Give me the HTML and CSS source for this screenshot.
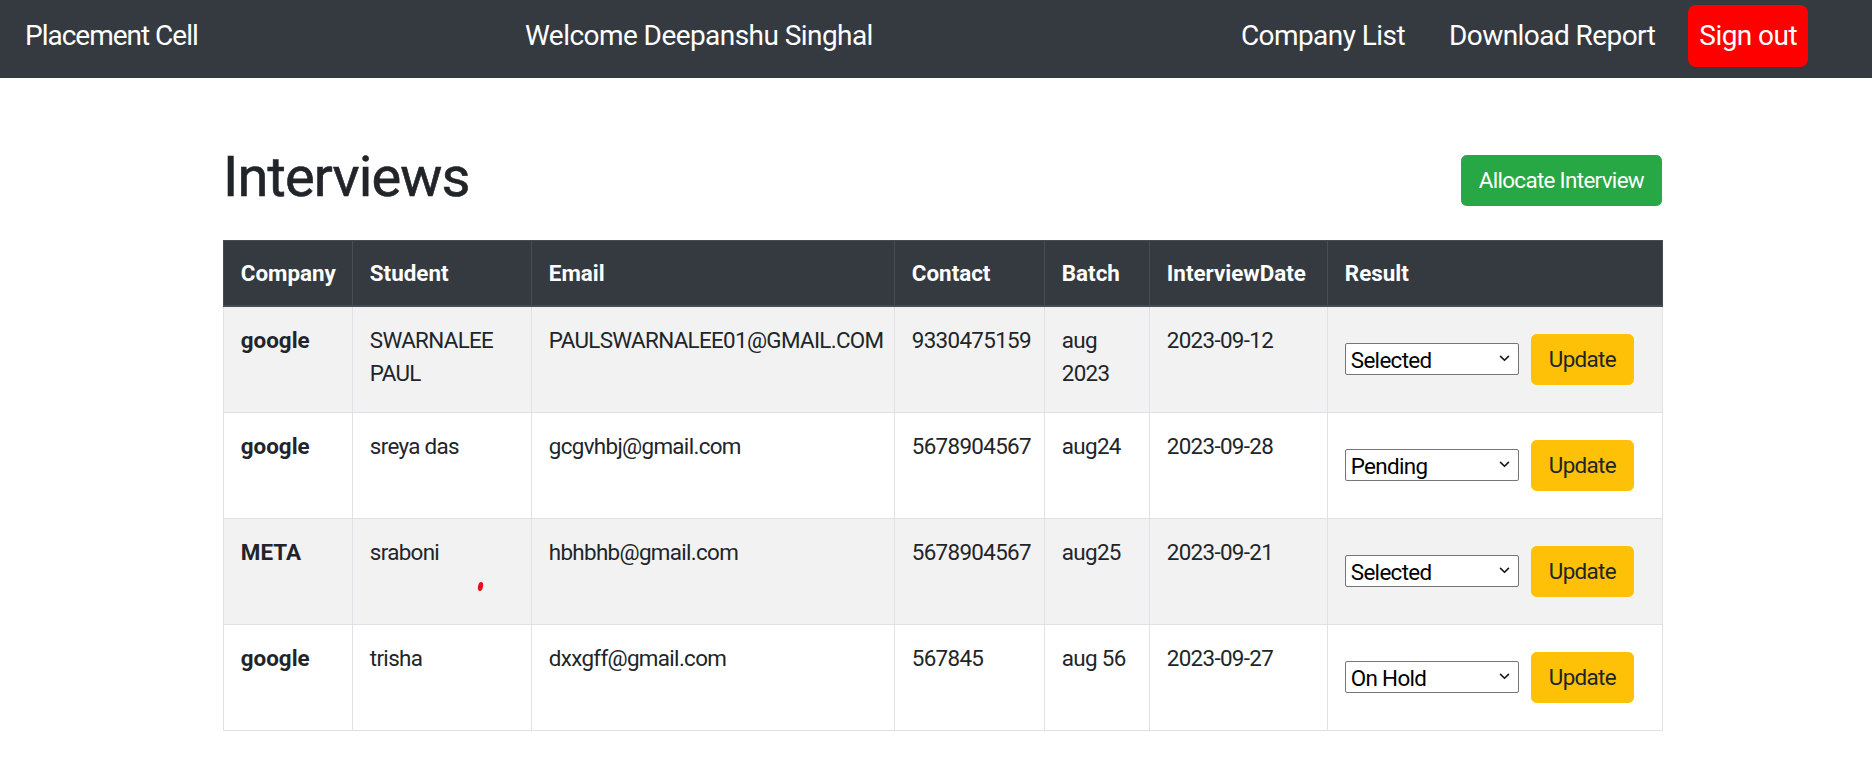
FILE: index.html
```html
<!DOCTYPE html>
<html lang="en">
<head>
<meta charset="utf-8">
<title>Interviews</title>
<link rel="stylesheet" href="styles.css">
</head>
<body>
<nav class="navbar">
  <a class="brand" href="#">Placement Cell</a>
  <span class="welcome">Welcome Deepanshu Singhal</span>
  <ul class="nav-links">
    <li><a class="nav-link" href="#">Company List</a></li>
    <li><a class="nav-link" href="#">Download Report</a></li>
    <li><a class="nav-link signout" href="#">Sign out</a></li>
  </ul>
</nav>
<main class="container">
  <div class="page-head">
    <h1>Interviews</h1>
    <button class="btn btn-success">Allocate Interview</button>
  </div>
  <table class="table">
    <colgroup>
      <col class="c-company">
      <col class="c-student">
      <col class="c-email">
      <col class="c-contact">
      <col class="c-batch">
      <col class="c-date">
      <col class="c-result">
    </colgroup>
    <thead>
      <tr>
        <th>Company</th>
        <th>Student</th>
        <th>Email</th>
        <th>Contact</th>
        <th>Batch</th>
        <th>InterviewDate</th>
        <th>Result</th>
      </tr>
    </thead>
    <tbody>
      <tr>
        <td class="strong">google</td>
        <td>SWARNALEE PAUL</td>
        <td>PAULSWARNALEE01@GMAIL.COM</td>
        <td>9330475159</td>
        <td>aug 2023</td>
        <td>2023-09-12</td>
        <td><div class="result"><span class="select-wrap"><select class="status"><option selected>Selected</option><option>Pending</option><option>On Hold</option><option>Not Selected</option></select><svg class="chev" viewBox="0 0 12 8" aria-hidden="true"><path d="M1.5 1.5 L6 6 L10.5 1.5"/></svg></span><button class="btn btn-warning">Update</button></div></td>
      </tr>
      <tr>
        <td class="strong">google</td>
        <td>sreya das</td>
        <td>gcgvhbj@gmail.com</td>
        <td>5678904567</td>
        <td>aug24</td>
        <td>2023-09-28</td>
        <td><div class="result"><span class="select-wrap"><select class="status"><option>Selected</option><option selected>Pending</option><option>On Hold</option><option>Not Selected</option></select><svg class="chev" viewBox="0 0 12 8" aria-hidden="true"><path d="M1.5 1.5 L6 6 L10.5 1.5"/></svg></span><button class="btn btn-warning">Update</button></div></td>
      </tr>
      <tr>
        <td class="strong">META</td>
        <td class="dot-cell">sraboni<span class="cursor-dot"></span></td>
        <td>hbhbhb@gmail.com</td>
        <td>5678904567</td>
        <td>aug25</td>
        <td>2023-09-21</td>
        <td><div class="result"><span class="select-wrap"><select class="status"><option selected>Selected</option><option>Pending</option><option>On Hold</option><option>Not Selected</option></select><svg class="chev" viewBox="0 0 12 8" aria-hidden="true"><path d="M1.5 1.5 L6 6 L10.5 1.5"/></svg></span><button class="btn btn-warning">Update</button></div></td>
      </tr>
      <tr>
        <td class="strong">google</td>
        <td>trisha</td>
        <td>dxxgff@gmail.com</td>
        <td>567845</td>
        <td>aug 56</td>
        <td>2023-09-27</td>
        <td><div class="result"><span class="select-wrap"><select class="status"><option>Selected</option><option>Pending</option><option selected>On Hold</option><option>Not Selected</option></select><svg class="chev" viewBox="0 0 12 8" aria-hidden="true"><path d="M1.5 1.5 L6 6 L10.5 1.5"/></svg></span><button class="btn btn-warning">Update</button></div></td>
      </tr>
    </tbody>
  </table>
</main>
</body>
</html>
```

FILE: styles.css
```css
* {
  box-sizing: border-box;
}

html,
body {
  margin: 0;
  padding: 0;
}

body {
  font-family: Roboto, "Liberation Sans", Arial, sans-serif;
  color: #212529;
  background: #ffffff;
}

/* ---------- navbar ---------- */
.navbar {
  display: grid;
  grid-template-columns: 500px auto 1fr;
  align-items: start;
  height: 78px;
  padding: 5px 64px 0 25px;
  background: #343a40;
}

.brand,
.welcome {
  display: block;
  font-size: 28px;
  line-height: 42px;
  padding: 10px 0;
  color: #ffffff;
  text-decoration: none;
  letter-spacing: -0.02em;
  white-space: nowrap;
}

.brand {
  letter-spacing: -0.036em;
}

.nav-links {
  display: flex;
  justify-self: end;
  gap: 22px;
  list-style: none;
  margin: 0;
  padding: 0;
}

.nav-link {
  display: block;
  font-size: 28px;
  line-height: 42px;
  padding: 10px 11px;
  color: #ffffff;
  text-decoration: none;
  letter-spacing: -0.02em;
  white-space: nowrap;
}

.signout {
  background: #ff0000;
  border-radius: 8px;
}

/* ---------- page ---------- */
.container {
  width: 1439px;
  margin-left: 223px;
}

.page-head {
  display: flex;
  justify-content: space-between;
  align-items: flex-start;
  margin-top: 66px;
}

.page-head h1 {
  margin: 0;
  font-size: 56px;
  font-weight: 400;
  line-height: 67.2px;
  letter-spacing: -0.015em;
  color: #212529;
  -webkit-text-stroke: 0.6px #212529;
}

.btn {
  display: inline-flex;
  align-items: center;
  justify-content: center;
  height: 51px;
  padding: 0 17px;
  font-family: inherit;
  font-size: 22.4px;
  line-height: 33.6px;
  letter-spacing: -0.03em;
  border: 1px solid transparent;
  border-radius: 5.6px;
  cursor: pointer;
  white-space: nowrap;
}

.btn-success {
  margin-top: 11px;
  background: #28a745;
  border-color: #28a745;
  color: #ffffff;
}

.btn-warning {
  background: #ffc107;
  border-color: #ffc107;
  color: #212529;
}

/* ---------- table ---------- */
.table {
  width: 1439px;
  margin-top: 28.8px;
  border-collapse: collapse;
  table-layout: fixed;
}

.c-company { width: 129px; }
.c-student { width: 179px; }
.c-email { width: 363px; }
.c-contact { width: 150px; }
.c-batch { width: 105px; }
.c-date { width: 178px; }
.c-result { width: 335px; }

.table th {
  background: #343a40;
  color: #ffffff;
  font-size: 22.4px;
  font-weight: 700;
  line-height: 32px;
  padding: 16px 16.8px;
  text-align: left;
  vertical-align: bottom;
  border: 1px solid #454d55;
  border-bottom-width: 2px;
  white-space: nowrap;
}

.table td {
  font-size: 22.4px;
  line-height: 33.6px;
  padding: 16.8px;
  vertical-align: top;
  letter-spacing: -0.03em;
  border: 1px solid #dee2e6;
}

.table tbody tr:nth-child(odd) {
  background: #f2f2f2;
}

.table td.strong {
  font-weight: 700;
  letter-spacing: 0;
}

.result {
  display: flex;
  align-items: center;
  gap: 12px;
  height: 71.4px;
}

.select-wrap {
  position: relative;
  display: block;
  width: 174px;
  height: 32px;
}

.status {
  display: block;
  width: 174px;
  height: 32px;
  padding: 1px 24px 0 5px;
  font-family: inherit;
  font-size: 22.4px;
  letter-spacing: -0.03em;
  color: #000000;
  background: #ffffff;
  border: 1px solid #767676;
  border-radius: 2px;
  appearance: none;
  -webkit-appearance: none;
}

.chev {
  position: absolute;
  right: 9px;
  top: 12px;
  width: 11px;
  height: 7px;
  pointer-events: none;
}

.chev path {
  fill: none;
  stroke: #1b1b1b;
  stroke-width: 1.9;
  stroke-linecap: round;
  stroke-linejoin: round;
}

.dot-cell {
  position: relative;
}

.cursor-dot {
  position: absolute;
  left: 125px;
  top: 63px;
  width: 5px;
  height: 9px;
  border-radius: 50%;
  background: #e3121c;
  transform: rotate(12deg);
}
```
